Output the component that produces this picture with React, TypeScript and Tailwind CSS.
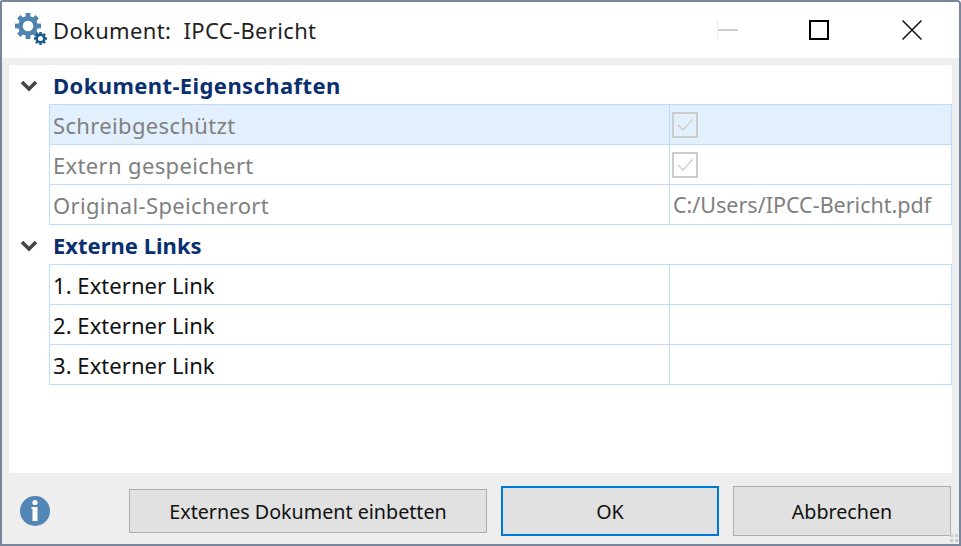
import { ReactNode } from "react";

const font = { fontFamily: '"Noto Sans", sans-serif' };

const bigTeeth = [0, 45, 90, 135, 180, 225, 270, 315];

function Gears() {
  return (
    <svg width="36" height="36" viewBox="0 0 36 36">
      <circle cx="14" cy="13" r="7.6" fill="none" stroke="#4f84b0" strokeWidth="4.6" />
      {bigTeeth.map((a) => (
        <rect key={a} x="11.6" y="0" width="4.8" height="5" fill="#4f84b0" transform={`rotate(${a} 14 13)`} />
      ))}
      <circle cx="26.5" cy="25.5" r="5.2" fill="white" />
      <circle cx="26.5" cy="25.5" r="3.8" fill="none" stroke="#1d5a8c" strokeWidth="2.6" />
      {bigTeeth.map((a) => (
        <rect key={a} x="25.3" y="19" width="2.4" height="2.4" fill="#1d5a8c" transform={`rotate(${a} 26.5 25.5)`} />
      ))}
    </svg>
  );
}

function Chevron() {
  return (
    <svg width="18" height="12" viewBox="0 0 18 12">
      <polyline points="2,2 9,9 16,2" fill="none" stroke="#444444" strokeWidth="3.6" />
    </svg>
  );
}

function Check() {
  return (
    <div className="ml-[-1px] w-[26px] h-[26px] border-[2px] border-[#cccccc] flex items-center justify-center">
      <svg width="20" height="20" viewBox="0 0 20 20">
        <polyline points="3,10 8,15 18,4" fill="none" stroke="#d2d2d2" strokeWidth="1.6" />
      </svg>
    </div>
  );
}

function SectionHeader({ title, wide }: { title: string; wide?: boolean }) {
  return (
    <div className="flex items-center h-[39px]">
      <div className="w-[40px] pl-[11px] pt-[2px] flex items-center">
        <Chevron />
      </div>
      <span className={`pl-[4px] pt-[1px] text-[22px] font-bold text-[#0a2f6f] ${wide ? "tracking-[0.4px]" : ""}`}>{title}</span>
    </div>
  );
}

type RowProps = {
  label: string;
  children?: ReactNode;
  muted?: boolean;
  selected?: boolean;
  first?: boolean;
};

function Row({ label, children, muted, selected, first }: RowProps) {
  return (
    <div
      className={`ml-[40px] grid grid-cols-[620px_1fr] border-b border-x border-[#bcdcff] ${first ? "h-[41px] border-t" : "h-[40px]"} ${selected ? "bg-[#e2f0fd]" : "bg-white"}`}
    >
      <div className={`flex items-center pl-[3px] pt-[1px] text-[22px] border-r border-[#bcdcff] ${muted ? "text-[#808080] tracking-[0.35px]" : "text-[#111111] tracking-[0.05px]"}`}>
        {label}
      </div>
      <div className="flex items-center pl-[3px] text-[21.5px] text-[#808080]">{children}</div>
    </div>
  );
}

export default function App() {
  return (
    <div style={font} className="w-[961px] h-[546px] bg-[#eeeeee] border-2 border-[#78859a] rounded-tr-[4px] rounded-tl-[2px] flex flex-col overflow-hidden relative">
      {/* title bar */}
      <div className="h-[56px] bg-white flex items-center shrink-0">
        <div className="pl-[12px] pt-[2px] w-[51px]">
          <Gears />
        </div>
        <span className="text-[22px] tracking-[0.35px] text-[#222222] whitespace-pre">Dokument:  IPCC-Bericht</span>
        <div className="ml-auto flex items-center">
          <div className="w-[21px] h-[20px] border-l border-[#eeeeee] flex items-center">
            <div className="w-[20px] h-[2px] bg-[#cccccc]" />
          </div>
          <div className="ml-[71px] w-[20px] h-[20px] border-2 border-black" />
          <div className="ml-[73px] mr-[37px] w-[20px] h-[20px]">
            <svg width="20" height="20" viewBox="0 0 20 20">
              <path d="M0.5 0.5 L19.5 19.5 M19.5 0.5 L0.5 19.5" stroke="#111111" strokeWidth="1.5" fill="none" />
            </svg>
          </div>
        </div>
      </div>

      {/* property list */}
      <div className="flex-1 px-[7px] pt-[7px]">
        <div className="bg-white h-[408px]">
          <SectionHeader title="Dokument-Eigenschaften" wide />
          <Row label="Schreibgeschützt" muted selected first>
            <Check />
          </Row>
          <Row label="Extern gespeichert" muted>
            <Check />
          </Row>
          <Row label="Original-Speicherort" muted>
            <span className="pt-[1px]">C:/Users/IPCC-Bericht.pdf</span>
          </Row>
          <SectionHeader title="Externe Links" />
          <Row label="1. Externer Link" first />
          <Row label="2. Externer Link" />
          <Row label="3. Externer Link" />
        </div>
      </div>

      {/* footer */}
      <div className="h-[71px] shrink-0 flex items-start pl-[18px] pr-[8px] text-[19.7px] text-[#111111]">
        <svg width="30" height="30" viewBox="0 0 30 30" className="mt-[23px]">
          <circle cx="15" cy="15" r="15" fill="#5286b5" />
          <circle cx="15" cy="6.5" r="2.6" fill="white" />
          <path d="M12.5 11 H17.5 V25 H12.5 V13 H11.5 V11 Z" fill="white" />
        </svg>
        <button className="ml-[79px] w-[358px] h-[44px] mt-[16px] pt-[2px] bg-[#e1e1e1] border border-[#adadad]">Externes Dokument einbetten</button>
        <button className="ml-[14px] w-[218px] h-[50px] mt-[13px] pt-[2px] bg-[#e1e1e1] border-2 border-[#0078d7]">OK</button>
        <button className="ml-[14px] w-[218px] h-[50px] mt-[13px] pt-[2px] bg-[#e1e1e1] border border-[#adadad]">Abbrechen</button>
      </div>

      {/* resize grip */}
      <div className="absolute right-[1px] bottom-[2px] grid grid-cols-2 gap-[2px]">
        <div className="w-[3px] h-[3px] bg-[#cccccc]" />
        <div className="w-[3px] h-[3px] bg-[#cccccc]" />
        <div className="w-[3px] h-[3px] bg-[#cccccc]" />
        <div className="w-[3px] h-[3px] bg-[#cccccc]" />
      </div>
    </div>
  );
}
